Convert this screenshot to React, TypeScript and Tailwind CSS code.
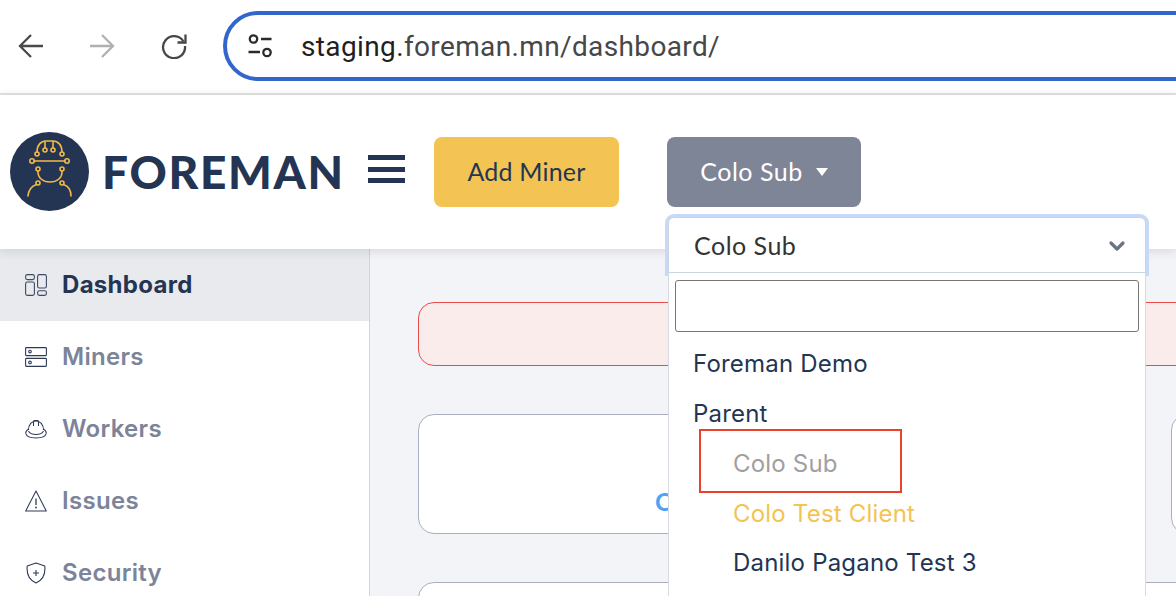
import React from 'react';
import { ChevronDown } from 'lucide-react';

const font = "font-['Lato','Noto_Sans',sans-serif]";

const Logo = () => (
  <svg viewBox="0 0 79 79" className="w-[79px] h-[79px] shrink-0">
    <circle cx="39.5" cy="39.5" r="39.5" fill="#243553" />
    <g fill="none" stroke="#f3b944" strokeWidth="1.600" strokeLinecap="round">
      <path d="M27 20 C27 13 31 9 36 9 H43 C48 9 52 13 52 20" />
      <path d="M35 16 V9.500 M43 16 V9.500" />
      <circle cx="27" cy="22" r="2" />
      <circle cx="35" cy="18" r="2" />
      <circle cx="43" cy="18" r="2" />
      <circle cx="52" cy="22" r="2" />
      <path d="M24 29 H55" />
      <circle cx="22" cy="29" r="2.200" />
      <circle cx="57" cy="29" r="2.200" />
      <circle cx="28" cy="37" r="2" />
      <circle cx="52" cy="37" r="2" />
      <path d="M28 39 V40 C28 46 33 50 40 50 C47 50 52 46 52 40 V39" />
      <circle cx="28" cy="51" r="2" />
      <circle cx="52" cy="51" r="2" />
      <path d="M26.500 52.500 C22 54 18.500 58 18 64 M53.500 52.500 C58 54 61 58 61 64" />
    </g>
  </svg>
);

const DashboardIcon = () => (
  <svg viewBox="0 0 22 22" className="w-[22px] h-[22px]" fill="none" stroke="#3c4a66" strokeWidth="1.100">
    <rect x="0.600" y="0.600" width="8.800" height="5" rx="1.800" />
    <rect x="0.600" y="8" width="8.800" height="13.400" rx="1.800" />
    <rect x="12.600" y="0.600" width="8.800" height="13.400" rx="1.800" />
    <rect x="12.600" y="16.800" width="8.800" height="4.600" rx="1.800" />
  </svg>
);

const MinersIcon = () => (
  <svg viewBox="0 0 22 20" className="w-[22px] h-[20px]" fill="none" stroke="#2d3b58" strokeWidth="1.100">
    <rect x="0.600" y="0.600" width="20.800" height="8" rx="0.800" />
    <rect x="0.600" y="11.400" width="20.800" height="8" rx="0.800" />
    <circle cx="5" cy="4.600" r="1.300" />
    <circle cx="5" cy="15.400" r="1.300" />
  </svg>
);

const WorkersIcon = () => (
  <svg viewBox="0 0 22 20" className="w-[22px] h-[20px]" fill="none" stroke="#2d3b58" strokeWidth="1.050">
    <path d="M3.500 11 C3.500 5.500 7 2 11 2 C15 2 18.500 5.500 18.500 11" />
    <path d="M8.500 2.500 V7 M13.500 2.500 V7 M8.500 1.500 H13.500" />
    <path d="M3.500 10 C1.500 11.500 0.500 13 0.800 14.500 C1.500 17.800 6 19 11 19 C16 19 20.500 17.800 21.200 14.500 C21.500 13 20.500 11.500 18.500 10" />
    <path d="M3.500 12 C5 15 8 15.500 11 15.500 C14 15.500 17 15 18.500 12" />
  </svg>
);

const IssuesIcon = () => (
  <svg viewBox="0 0 22 22" className="w-[22px] h-[22px]" fill="none" stroke="#2d3b58" strokeWidth="1.050">
    <path d="M11 1 L21.300 21 H0.700 Z" strokeLinejoin="round" />
    <path d="M11 8.500 V15" strokeWidth="1.300" />
    <circle cx="11" cy="17.500" r="0.900" fill="#2d3b58" stroke="none" />
  </svg>
);

const SecurityIcon = () => (
  <svg viewBox="0 0 20 22" className="w-[20px] h-[22px]" fill="none" stroke="#2d3b58" strokeWidth="1.100">
    <path d="M10 1 L18.800 4 C19.500 11 18 17.500 10 21 C2 17.500 0.500 11 1.200 4 Z" strokeLinejoin="round" />
    <path d="M10 8 V14 M7 11 H13" />
  </svg>
);

const navItems = [
  { label: 'Dashboard', icon: <DashboardIcon />, active: true },
  { label: 'Miners', icon: <MinersIcon /> },
  { label: 'Workers', icon: <WorkersIcon /> },
  { label: 'Issues', icon: <IssuesIcon /> },
  { label: 'Security', icon: <SecurityIcon /> },
];

export default function App() {
  return (
    <div className={`relative w-[1176px] h-[596px] overflow-hidden bg-white flex flex-col ${font}`}>
      {/* browser chrome */}
      <div className="h-[95px] shrink-0 border-b-2 border-[#e3e3e3] flex items-center pl-[18px] pb-[2px] gap-[36px]">
        <div className="flex items-center gap-[45px] pr-[1px]">
          <svg viewBox="0 0 26 26" className="w-[26px] h-[26px]" fill="none" stroke="#4a4a4a" strokeWidth="2.300">
            <path d="M25 13 H2.500 M13 2 L2 13 L13 24" />
          </svg>
          <svg viewBox="0 0 26 26" className="w-[26px] h-[26px]" fill="none" stroke="#b0b0b0" strokeWidth="2.300">
            <path d="M1 13 H23.500 M13 2 L24 13 L13 24" />
          </svg>
          <svg viewBox="0 0 26 26" className="w-[26px] h-[26px] translate-x-[1px]" fill="none" stroke="#474747" strokeWidth="2.300">
            <path d="M22.500 8.500 A11 11 0 1 0 24 13" />
            <path d="M24.500 1.500 V9.500 H16.500" />
          </svg>
        </div>
        <div className="h-[70px] flex-1 -mr-[60px] border-[4px] border-[#3366cc] rounded-[35px] flex items-center pl-[20px] gap-[28px]">
          <svg viewBox="0 0 26 26" className="w-[26px] h-[26px]" fill="none" stroke="#2b2b2b" strokeWidth="2.300">
            <circle cx="6.500" cy="6" r="3.700" />
            <path d="M14 6 H24.500 M1.500 19 H13" />
            <circle cx="20" cy="19.500" r="3.700" />
          </svg>
          <span className="pt-[3px] text-[28px] tracking-[0.37px] text-[#1f1f1f] font-['Roboto',sans-serif]">
            staging.<span className="text-[#474747]">foreman.mn/dashboard/</span>
          </span>
        </div>
      </div>

      {/* app header */}
      <div className="relative z-10 h-[154px] shrink-0 bg-white shadow-[0_2px_10px_rgba(30,40,60,0.14)] flex items-center pl-[10px] pb-[2px]">
        <Logo />
        <span className="w-[266px] ml-[13px] mt-[2px] text-[46px] leading-none font-black text-[#243553] tracking-[1.700px]">FOREMAN</span>
        <div className="w-[37px] mb-[4px] flex flex-col gap-[6.500px]">
          <div className="h-[5px] bg-[#243553]" />
          <div className="h-[5px] bg-[#243553]" />
          <div className="h-[5px] bg-[#243553]" />
        </div>
        <button className="ml-[29px] mt-[2px] w-[185px] h-[70px] rounded-lg bg-[#f3c353] text-[#243553] text-[25px] tracking-[0.2px]">Add Miner</button>
        <button className="ml-[48px] mt-[2px] w-[194px] h-[70px] rounded-lg bg-[#7e8596] text-white text-[25px] tracking-[0.5px] flex items-center justify-center gap-[13px]">
          Colo Sub
          <span className="w-0 h-0 border-x-[6px] border-x-transparent border-t-[8px] border-t-white" />
        </button>
      </div>

      <div className="flex-1 flex min-h-0">
        {/* sidebar */}
        <div className="w-[370px] shrink-0 bg-white border-r border-[#d0d5da] flex flex-col font-['Inter',sans-serif]">
          {navItems.map(item => (
            <div key={item.label} className={`h-[72px] shrink-0 flex items-center pl-[25px] gap-[15px] ${item.active ? 'bg-[#e8eaee]' : ''}`}>
              <div className="w-[22px] flex justify-center">{item.icon}</div>
              <span className={`text-[24px] tracking-[0.3px] ${item.active ? 'font-bold text-[#243553]' : 'font-semibold text-[#7b8499]'}`}>{item.label}</span>
            </div>
          ))}
        </div>

        {/* main */}
        <div className="flex-1 bg-[#f3f4f8] pl-[48px] pt-[53px] overflow-hidden">
          <div className="h-[64px] w-[800px] rounded-[16px] border border-[#ea4b4b] bg-[#faecea]" />
          <div className="mt-[48px] flex gap-[25px]">
            <div className="h-[120px] w-[728px] shrink-0 rounded-[16px] border border-[#a9afc0] bg-white pl-[236px] pt-[68px]">
              <span className="text-[25px] font-bold text-[#4da3f5]">C</span>
            </div>
            <div className="h-[120px] w-[200px] shrink-0 rounded-[16px] border border-[#a9afc0] bg-white" />
          </div>
          <div className="mt-[48px] h-[120px] w-[800px] rounded-[16px] border border-[#a9afc0] bg-white" />
        </div>
      </div>

      {/* client dropdown */}
      <div className="absolute z-20 left-[668px] top-[217px] w-[478px] h-[400px] bg-white">
        <div className="h-[56px] rounded-t-md border border-[#cbd5e0] shadow-[0_0_0_3px_#c7d9f8] bg-white flex items-center justify-between pl-[25px] pr-[16px] pt-[2px] text-[25px] tracking-[0.5px] text-[#333333]">
          Colo Sub
          <ChevronDown className="w-[24px] h-[24px] text-[#6b7280]" strokeWidth={3.200} />
        </div>
        <div className="relative h-[344px] border-x border-[#d5dae5] bg-white px-[6px] pt-[7px]">
          <div className="h-[52px] rounded-[3px] border border-[#767676] bg-white" />
          <div className="mt-[7px] flex flex-col text-[24px] tracking-[0.2px] text-[#243553] font-['Inter',sans-serif]">
            <div className="h-[50px] flex items-center pl-[18px]">Foreman Demo</div>
            <div className="h-[50px] flex items-center pl-[18px]">Parent</div>
            <div className="h-[50px] flex items-center pl-[58px] text-[#a0a0a0]">Colo Sub</div>
            <div className="h-[49px] flex items-center pl-[58px] text-[#f3c353]">Colo Test Client</div>
            <div className="h-[49px] flex items-center pl-[58px]">Danilo Pagano Test 3</div>
          </div>
          {/* annotation box */}
          <div className="absolute left-[30px] top-[156px] w-[203px] h-[64px] border-2 border-[#e8432a]" />
        </div>
      </div>
    </div>
  );
}
